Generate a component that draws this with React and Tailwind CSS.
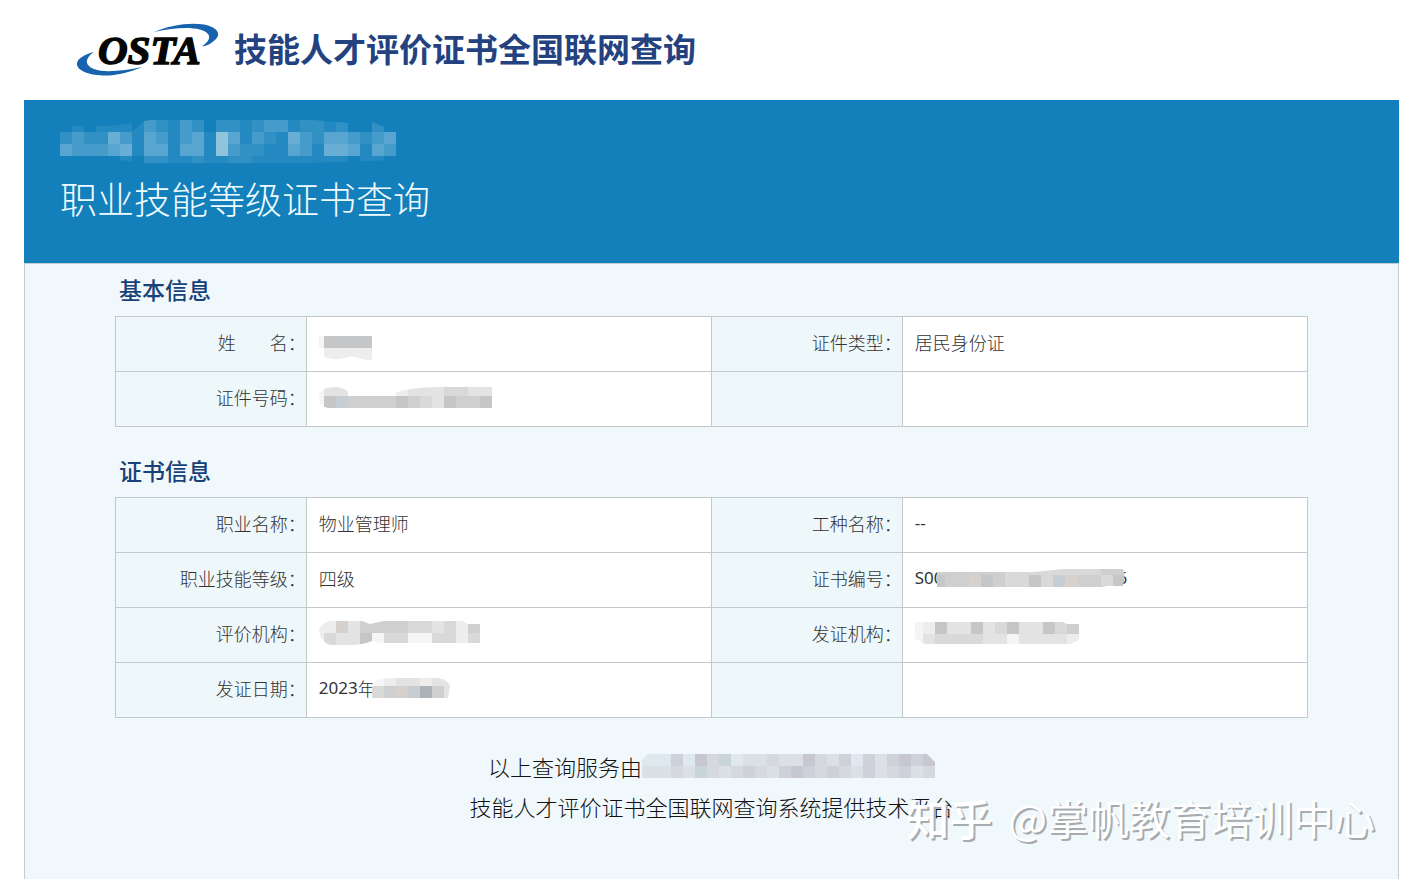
const FONT = 'font-["Noto_Sans_CJK_SC",sans-serif]';

const GREYS = {
  1: '#f6f5f5',
  2: '#ededed',
  3: '#e3e3e4',
  4: '#d9d9da',
  5: '#cfcfd0',
  6: '#c5c6c8',
  7: '#adb2b7',
  b: '#c6cdd3',
  t: '#d6d1cc',
};

const TINTS = {
  1: '#dfe8ef',
  2: '#dbe0e5',
  3: '#d5d9de',
  4: '#ced1d9',
  5: '#c8c6d1',
  g: '#c7d5d6',
};

const BLUES = {
  1: '#2489c0',
  2: '#3291c4',
  3: '#459bca',
  4: '#57a5d0',
  5: '#69afd5',
  7: '#8fc4dc',
};

/* A block-censored value: each character is one 12px cell, "0" is empty. */
function Mosaic({ rows, palette = GREYS, crop = 0, top = 0, trim = 0, outline, label, className = '' }) {
  const width = rows[0].length * 12 - crop;
  const height = rows.length * 12 - top - trim;
  const id = `mask-${label}`;
  return (
    <svg
      role="img"
      aria-label="已隐藏"
      width={width}
      height={height}
      viewBox={`${crop} ${top} ${width} ${height}`}
      shapeRendering="crispEdges"
      className={className}
    >
      <clipPath id={id}>
        {outline ? <path d={outline} /> : <rect x={crop} y={top} width={width} height={height} />}
      </clipPath>
      <g clipPath={`url(#${id})`}>
        {rows.map((row, y) =>
          [...row].map((cell, x) =>
            palette[cell] ? (
              <rect key={`${x}-${y}`} x={x * 12} y={y * 12} width="12" height="12" fill={palette[cell]} />
            ) : null,
          ),
        )}
      </g>
    </svg>
  );
}

function Logo() {
  return (
    <svg width="144" height="56" viewBox="0 0 144 56" role="img" aria-label="OSTA" className="shrink-0">
      <path
        d="M78 12C94 5 114 2 128 4.500C141 7 146 14 139 20C135 24 131 25.500 126 26.500C132 22 135 18 132 14C126 7 105 6 78 12Z"
        fill="#1763ae"
      />
      <path
        d="M18 32C9 34 0 39 1 45C3 53 21 57 38 55C50 53.500 59 50 66 47C48 51 28 53 18 49C8 45 9 38 18 32Z"
        fill="#1763ae"
      />
      <text
        x="22"
        y="44"
        fontFamily="Liberation Serif, serif"
        fontSize="41"
        fontWeight="700"
        fontStyle="italic"
        fill="#050505"
        stroke="#050505"
        strokeWidth="1.500"
      >
        OSTA
      </text>
    </svg>
  );
}

function InfoTable({ label, rows }) {
  return (
    <table aria-label={label} className="w-full table-fixed border-collapse text-[18px] leading-6 text-[#333]">
      <colgroup>
        <col className="w-[16%]" />
        <col className="w-[34%]" />
        <col className="w-[16%]" />
        <col className="w-[34%]" />
      </colgroup>
      <tbody>
        {rows.map((row, i) => (
          <tr key={i} className="h-[55px]">
            {row.map((cell, j) =>
              j % 2 === 0 && cell ? (
                <th
                  key={j}
                  scope="row"
                  className="border border-[#c3c8ca] bg-[#eef7fa] pb-1 text-right font-light whitespace-nowrap"
                >
                  {cell}
                </th>
              ) : (
                <td
                  key={j}
                  className={`border border-[#c3c8ca] pb-1 pl-3 font-light ${j % 2 === 0 ? 'bg-[#eef7fa]' : 'bg-white'}`}
                >
                  <div className="flex items-center">{cell}</div>
                </td>
              ),
            )}
          </tr>
        ))}
      </tbody>
    </table>
  );
}

const Latin = ({ children }) => <span className='font-["Noto_Sans",sans-serif] text-[17px] font-normal'>{children}</span>;

const basicRows = [
  [
    <span className="inline-flex gap-[34px]">
      <span>姓</span>
      <span>名：</span>
    </span>,
    <Mosaic
      label="name"
      crop={7}
      rows={['16666', '02222']}
      outline="M7 0H60V24C50 25 46 20 36 21C28 24 16 24 12 20V12H6Z"
      className="mt-3"
    />,
    '证件类型：',
    '居民身份证',
  ],
  [
    '证件号码：',
    <Mosaic
      label="id"
      crop={7}
      top={3}
      rows={['133000023334433', '16b555565436556']}
      outline="M7 10Q10 3 24 3Q34 4 36 8H86Q100 3 130 3H180V24H16Q7 22 7 14Z"
    />,
    null,
    null,
  ],
];

const certRows = [
  ['职业名称：', '物业管理师', '工种名称：', <Latin>--</Latin>],
  [
    '职业技能等级：',
    '四级',
    '证书编号：',
    <>
      <Latin>S00</Latin>
      <Mosaic
        label="number"
        top={6}
        crop={4}
        rows={['5555554444444455', '655t654464bt5546']}
        outline="M4 9H100L130 6H190Q193 12 190 23H172V24H4Z"
        className="relative -mr-2 -ml-[6px]"
      />
      <Latin>6</Latin>
    </>,
  ],
  [
    '评价机构：',
    <Mosaic
      label="assessor"
      crop={7}
      rows={['22t35555443425', '24336144114424']}
      outline="M7 8Q12 0 20 0H50L58 3L72 0H150L156 3H168V22H70L60 20Q50 24 40 24H18Q7 20 7 8Z"
    />,
    '发证机构：',
    <Mosaic
      label="issuer"
      crop={4}
      trim={2}
      rows={['12633634633645', '13444433133332']}
      outline="M4 0H152L156 2H168V18L160 22H14L4 17Z"
    />,
  ],
  [
    '发证日期：',
    <>
      <Latin>2023</Latin>年
      <Mosaic
        label="date"
        top={4}
        rows={['1233233', '45tb753']}
        outline="M0 10Q4 4 20 4H66Q76 6 78 12L76 24H0Z"
        className="relative -ml-1"
      />
    </>,
    null,
    null,
  ],
];

const headingClass = 'mb-3 pl-1 text-[23px] leading-[30px] font-medium text-[#174278]';

export default function App() {
  return (
    <div className={`relative flex min-h-screen flex-col bg-white pr-3 pl-6 ${FONT}`}>
      <header className="flex h-[100px] items-center gap-[14px] pb-1 pl-[52px]">
        <Logo />
        <h1 className="text-[33px] leading-[48px] font-bold whitespace-nowrap text-[#24427f]">
          技能人才评价证书全国联网查询
        </h1>
      </header>

      <section className="bg-[#1380bb] px-9 pt-5 pb-[43px]">
        <Mosaic
          label="agency"
          palette={BLUES}
          trim={4}
          rows={[
            '0101111321320221233122122121',
            '2322531431341741321532443234',
            '4333451441441732211431554143',
            '0000010221121122111111110110',
          ]}
          outline="M0 12L12 6H50L72 3V12L84 1L90 0H252L288 3V12H312V2L324 7V12H336V40L250 43H84L60 40L0 36Z"
        />
        <h2 className="mt-3 text-[37px] leading-[44px] font-light text-[#effcff]">职业技能等级证书查询</h2>
      </section>

      <main className="grow border-x border-t border-[#c3ced4] bg-[#f0f8fc] px-[90px] pt-[10px] pb-8">
        <h3 className={headingClass}>基本信息</h3>
        <InfoTable label="基本信息" rows={basicRows} />

        <h3 className={`mt-7 ${headingClass}`}>证书信息</h3>
        <InfoTable label="证书信息" rows={certRows} />

        <footer className="mt-7 text-center text-[22px] leading-10 font-light text-[#111]">
          <p className="flex items-center justify-center">
            以上查询服务由
            <Mosaic
              label="provider"
              palette={TINTS}
              crop={7}
              rows={['1114153g12232253241424545', '22232g3234324543432423423']}
              outline="M7 6L13 0H292L300 8V24H7Z"
            />
          </p>
          <p>技能人才评价证书全国联网查询系统提供技术平台</p>
        </footer>
      </main>

      <div className="pointer-events-none absolute right-9 bottom-8 flex gap-4 text-[41px] leading-[60px] whitespace-nowrap text-white [text-shadow:2px_2px_0_#a8abad]">
        <span className="text-[43px] font-medium">知乎</span>
        <span>@掌帆教育培训中心</span>
      </div>
    </div>
  );
}
